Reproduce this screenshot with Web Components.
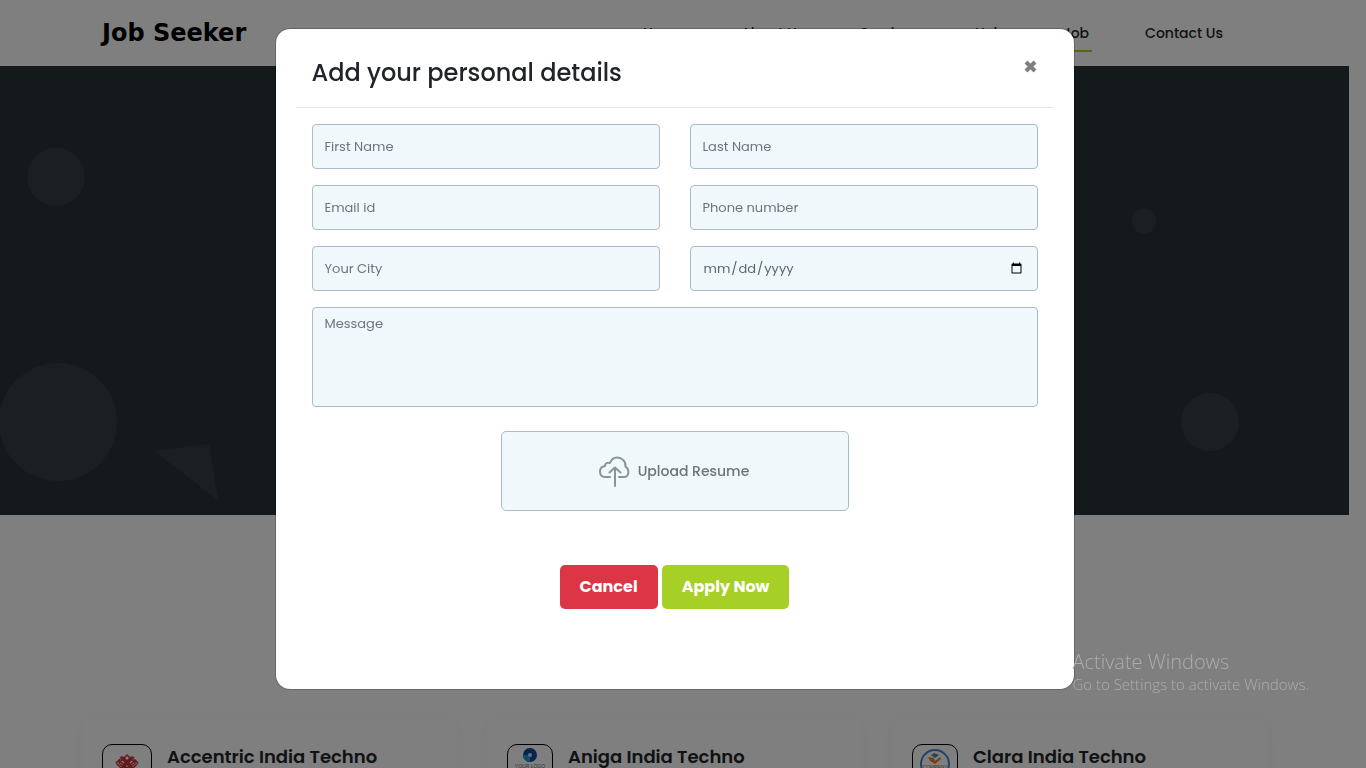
<!DOCTYPE html>
<html lang="en">
<head>
<meta charset="utf-8">
<meta name="viewport" content="width=device-width, initial-scale=1">
<title>Job Seeker</title>
<style>
html, body { margin: 0; background: #fff; }
body { font-family: Poppins, Inter, sans-serif; color: #212529; height: 100vh; overflow: hidden; }
</style>
</head>
<body>
<job-app></job-app>
<script>
const define = (name, html) => customElements.define(name, class extends HTMLElement {
  constructor() {
    super();
    const t = document.createElement('template');
    t.innerHTML = '<style>*{box-sizing:border-box}</style>' + html;
    this.attachShadow({ mode: 'open' }).append(t.content.cloneNode(true));
  }
});

define('site-header', `
<style>
:host { display: block; }
header { display: flex; align-items: center; justify-content: space-between; height: 66px; padding: 0 123px 0 102px; }
.brand { font: bold 24px/32px "DejaVu Sans", sans-serif; color: #000; text-decoration: none; }
nav { display: flex; gap: 50px; }
nav a { padding: 2px 3px 0; font-size: 14px; font-weight: 500; line-height: 34px; color: #212529; text-decoration: none; border-bottom: 2px solid transparent; white-space: nowrap; }
nav a.on { border-color: #a6d026; }
</style>
<header>
  <a class="brand" href="#">Job Seeker</a>
  <nav><a href="#">Home</a><a href="#">About Us</a><a href="#">Services</a><a href="#">Help</a><a class="on" href="#">Job</a><a href="#">Contact Us</a></nav>
</header>`);

define('hero-banner', `
<style>
:host { display: block; background: #283238; }
svg { display: block; width: 100%; height: 449px; }
</style>
<svg viewBox="0 0 1349 449" preserveAspectRatio="none" fill="#344045" aria-hidden="true">
  <circle cx="56" cy="111" r="29"/><circle cx="58" cy="356" r="59"/>
  <path d="M154 385L209 378L218 434Z"/>
  <circle cx="1144" cy="155" r="12.500"/><circle cx="1210" cy="356" r="29"/>
</svg>`);

define('company-card', `
<style>
:host { display: block; flex: 1; }
article { display: flex; gap: 15px; height: 200px; padding: 26px 20px; border-radius: 10px; box-shadow: 0 0 20px rgba(0,0,0,.03); }
.logo { width: var(--logo, 46px); height: 50px; flex: none; border: 1px solid #000; border-radius: 10px; overflow: hidden; }
h2 { margin: 0; font-size: 18px; font-weight: 600; line-height: 26px; white-space: nowrap; }
::slotted(svg) { display: block; width: 100%; height: 48px; }
</style>
<article><div class="logo"><slot name="logo"></slot></div><h2><slot></slot></h2></article>`);

customElements.define('form-field', class extends HTMLElement {
  connectedCallback() {
    const label = this.getAttribute('label');
    const type = this.getAttribute('type') || 'text';
    const control = type === 'area'
      ? `<textarea aria-label="${label}" placeholder="${label}"></textarea>`
      : `<input aria-label="${label}" type="${type}" ${type === 'date' ? '' : `placeholder="${label}"`}>`;
    this.attachShadow({ mode: 'open' }).innerHTML = `
<style>
:host { display: block; min-width: 0; }
input, textarea { box-sizing: border-box; display: block; width: 100%; height: 45px; margin: 0; padding: 6px 12px; border: 1px solid #a9bcc7; border-radius: 4px; background: #f0f8fc; font: 13px/20px Poppins, Inter, sans-serif; color: #5c6670; outline: none; }
textarea { height: 100px; resize: none; }
::placeholder { color: #6c757d; opacity: 1; }
</style>${control}`;
  }
});

define('upload-box', `
<style>
:host { display: block; position: relative; }
label { display: flex; align-items: center; justify-content: center; gap: 8px; height: 80px; padding-right: 2px; border: 1px solid #a9bcc7; border-radius: 5px; background: #f0f8fc; color: #6f7376; font-size: 14px; font-weight: 500; cursor: pointer; }
input { position: absolute; inset: 0; width: 100%; height: 100%; opacity: 0; }
svg { width: 32px; height: 32px; fill: none; stroke: #899499; stroke-width: 2; stroke-linecap: round; stroke-linejoin: round; }
</style>
<label for="f"><svg viewBox="0 0 32 32" aria-hidden="true"><path d="M12 22H7C3 22 2 19 2 16.500C2 13.500 4 11.500 7 11C7 8.500 9.500 7 12 8C13.500 4 16 2.500 19 2.500C24 2.500 28 6.500 27.500 11.500C32 15 31 22 26 22H21M17 31V13M11.500 17.500L17 12.500L22.500 17.500"/></svg>Upload Resume</label>
<input id="f" type="file">`);

define('details-dialog', `
<style>
:host { display: block; width: 800px; max-width: 100%; }
section { min-height: 662px; padding: 20px; background: #fff; background-clip: padding-box; border: 1px solid rgba(0,0,0,.2); border-radius: 15px; }
header { display: flex; justify-content: space-between; align-items: start; padding: 5px 16px 16px; border-bottom: 1px solid #e4e7ea; }
h1 { margin: 0; font-size: 24px; font-weight: 500; line-height: 37px; }
.close { width: 16px; height: 24px; padding: 0; border: 0; background: none; cursor: pointer; }
.close svg { display: block; width: 16px; height: 16px; stroke: #7f7f7f; stroke-width: 4; }
form { padding: 16px; }
.grid { display: grid; grid-template-columns: 1fr 1fr; gap: 16px 30px; }
.wide { grid-column: 1 / -1; }
upload-box { width: 348px; margin: 24px auto 0; }
.actions { display: flex; justify-content: center; gap: 4px; margin-top: 54px; }
.actions button { height: 44px; padding: 0 20px; border: 0; border-radius: 5px; background: #dc3545; color: #fff; font: 700 16px/24px Poppins, Inter, sans-serif; }
.actions .apply { background: #a6d026; }
</style>
<section role="dialog" aria-labelledby="t">
  <header><h1 id="t">Add your personal details</h1><button class="close" aria-label="Close"><svg viewBox="0 0 16 16"><path d="M4 4L13 13M13 4L4 13"/></svg></button></header>
  <form>
    <div class="grid">
      <form-field label="First Name"></form-field><form-field label="Last Name"></form-field>
      <form-field label="Email id" type="email"></form-field><form-field label="Phone number" type="tel"></form-field>
      <form-field label="Your City"></form-field><form-field label="Date" type="date"></form-field>
      <form-field class="wide" label="Message" type="area"></form-field>
    </div>
    <upload-box></upload-box>
    <div class="actions"><button type="button">Cancel</button><button class="apply" type="button">Apply Now</button></div>
  </form>
</section>`);

define('windows-notice', `
<style>
:host { display: block; font-family: "Segoe UI", "Open Sans", sans-serif; font-weight: 300; color: #adadad; white-space: nowrap; }
p { margin: 0; font-size: 20px; line-height: 26px; }
p + p { font-size: 15px; line-height: 18px; }
</style><p>Activate Windows</p><p>Go to Settings to activate Windows.</p>`);

define('job-app', `
<style>
:host { display: block; height: 100vh; overflow: hidden; }
.page { padding-right: 17px; }
.cards { display: flex; gap: 30px; margin-top: 203px; padding: 0 82px; }
.backdrop { position: fixed; inset: 0; padding: 28px 17px 28px 0; display: flex; justify-content: center; align-items: start; background: rgba(0,0,0,.5); }
windows-notice { position: fixed; right: 57px; bottom: 75px; }
</style>
<div class="page">
  <site-header></site-header>
  <hero-banner></hero-banner>
  <div class="cards">
    <company-card style="--logo:50px"><svg slot="logo" viewBox="0 0 48 48" fill="none" stroke="#c9363e" stroke-width="1.500"><path d="M13 18L19 12L31 24M13 18L19 24L31 12M35 18L29 12L17 24M35 18L29 24L17 12M16 18L24 10L32 18L24 26ZM16 15L25 24M32 15L23 24M20 12L29 21M28 12L19 21"/></svg>Accentric India Techno</company-card>
    <company-card><svg slot="logo" viewBox="0 0 44 48"><circle cx="22" cy="10" r="7" fill="#0a4a94"/><path d="M22 10V17A7 7 0 0 1 15 10Z" fill="#169bd8"/><circle cx="22" cy="10" r="2" fill="#b5e5ff"/><text x="22" y="23" text-anchor="middle" font-family="Liberation Sans" font-size="5" fill="#59758a">YOUR LOGO</text></svg>Aniga India Techno</company-card>
    <company-card><svg slot="logo" viewBox="0 0 44 48"><circle cx="22" cy="19" r="14" fill="none" stroke="#4687c5" stroke-width="2"/><path d="M15 12L21 13L22 16L27 12L28 14L22 19L17 16Z" fill="#ed8028"/><path d="M18 10L21 8L26 10L22 13Z" fill="#4687c5"/><text x="22" y="24" text-anchor="middle" font-family="Liberation Sans" font-size="5" fill="#8a6a50">COMPANY</text></svg>Clara India Techno</company-card>
  </div>
</div>
<div class="backdrop"><details-dialog></details-dialog></div>
<windows-notice></windows-notice>`);
</script>
</body>
</html>
